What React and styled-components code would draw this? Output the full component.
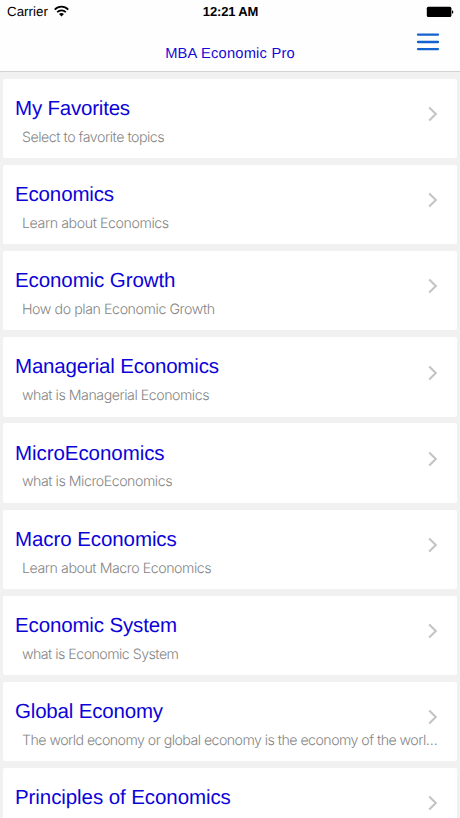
import React from 'react';
import styled, { createGlobalStyle } from 'styled-components';

const GlobalStyle = createGlobalStyle`
  * { box-sizing: border-box; }
  body { margin: 0; background: #f1f1f1; overflow: hidden; }
`;

const Screen = styled.div`
  width: 460px;
  height: 818px;
  overflow: hidden;
  display: flex;
  flex-direction: column;
  background: #f1f1f1;
  font-family: "Liberation Sans", Arial, sans-serif;
  text-rendering: geometricPrecision;
`;

const Header = styled.header`
  height: 72px;
  flex: none;
  background: #fefefe;
  border-bottom: 1px solid #d2d4d4;
`;

const StatusBar = styled.div`
  height: 24px;
  padding: 0 6px 0 7px;
  display: grid;
  grid-template-columns: 1fr auto 1fr;
  align-items: center;
  color: #000;
  font-size: 13.3px;
  line-height: 24px;
`;

const Carrier = styled.div`
  display: flex;
  align-items: center;
  gap: 6px;
  letter-spacing: 0.06px;
`;

const WifiIcon = styled.svg`
  display: block;
  margin-bottom: 2px;
`;

const Clock = styled.div`
  font-weight: 700;
  font-size: 13px;
  letter-spacing: -0.15px;
`;

const Battery = styled.svg`
  justify-self: end;
  display: block;
`;

const NavBar = styled.div`
  height: 47px;
  padding: 0 20px;
  display: grid;
  grid-template-columns: 1fr auto 1fr;
`;

const NavTitle = styled.h1`
  grid-column: 2;
  margin: 0;
  padding-top: 21px;
  font-size: 14.7px;
  line-height: 18px;
  font-weight: 400;
  letter-spacing: 0.2px;
  color: #1408d6;
`;

const MenuButton = styled.button`
  justify-self: end;
  align-self: start;
  margin-top: 8px;
  padding: 0;
  border: 0;
  background: none;
  svg { display: block; }
`;

const TopicList = styled.main`
  display: flex;
  flex-direction: column;
  gap: 6.7px;
  padding: 6.6px 3px 0;
`;

const Card = styled.article`
  height: 79.5px;
  flex: none;
  display: grid;
  grid-template-columns: 1fr 10px;
  grid-template-rows: 48px 24px;
  padding: 0 19px 0 12px;
  background: #fff;
  border-radius: 2px;
`;

const Title = styled.h2`
  margin: 0;
  padding-top: 17.3px;
  font-size: 20.5px;
  line-height: 25px;
  font-weight: 400;
  letter-spacing: ${(p) => p.$tracking}px;
  color: #0b03d8;
  white-space: nowrap;
`;

const Chevron = styled.svg`
  display: block;
  margin-top: 27.4px;
`;

const Subtitle = styled.p`
  grid-column: 1 / -1;
  margin: 0 -4px 0 7px;
  font-family: Inter, "Liberation Sans", sans-serif;
  font-size: 14.2px;
  line-height: 22px;
  font-weight: 300;
  letter-spacing: ${(p) => p.$tracking}px;
  color: #858585;
  white-space: nowrap;
`;

const topics = [
  ['My Favorites', 'Select to favorite topics', -0.2, -0.48],
  ['Economics', 'Learn about Economics', -0.15, -0.42],
  ['Economic Growth', 'How do plan Economic Growth', -0.1, -0.42],
  ['Managerial Economics', 'what is Managerial Economics', -0.18, -0.47],
  ['MicroEconomics', 'what is MicroEconomics', -0.06, -0.47],
  ['Macro Economics', 'Learn about Macro Economics', -0.08, -0.45],
  ['Economic System', 'what is Economic System', -0.14, -0.53],
  ['Global Economy', 'The world economy or global economy is the economy of the worl…', -0.18, -0.55],
  ['Principles of Economics', '', -0.08, 0],
];

export default function App() {
  return (
    <Screen>
      <GlobalStyle />
      <Header>
        <StatusBar>
          <Carrier>
            Carrier
            <WifiIcon width="15" height="12" viewBox="0 0 14 11" fill="none" stroke="#000" strokeWidth="1.6">
              <path d="M.7 4.2C4.2.5 9.8.5 13.3 4.2" />
              <path d="M3 6.5c2.2-2.2 5.8-2.2 8 0" />
              <path d="M4.7 8.2C6 7 8 7 9.3 8.2L7 10.6z" fill="#000" stroke="none" />
            </WifiIcon>
          </Carrier>
          <Clock>12:21 AM</Clock>
          <Battery width="28" height="12" viewBox="0 0 28 12">
            <rect x=".8" y=".7" width="24.6" height="10.4" rx="1.5" />
            <path d="M26 4.2c1.8.4 1.8 3.2 0 3.6z" />
          </Battery>
        </StatusBar>
        <NavBar>
          <NavTitle>MBA Economic Pro</NavTitle>
          <MenuButton aria-label="Menu">
            <svg width="24" height="20" viewBox="0 0 24 20" stroke="#1262cf" strokeWidth="2.3" strokeLinecap="round">
              <path d="M2 2.7h20M2 10h20M2 17.1h20" />
            </svg>
          </MenuButton>
        </NavBar>
      </Header>
      <TopicList>
        {topics.map(([title, subtitle, titleTracking, subtitleTracking]) => (
          <Card key={title}>
            <Title $tracking={titleTracking}>{title}</Title>
            <Chevron width="10" height="16" viewBox="0 0 10 16" fill="none" stroke="#c4c4c6" strokeWidth="2.1">
              <path d="M1.2 1.5 7.8 8l-6.6 6.5" />
            </Chevron>
            <Subtitle $tracking={subtitleTracking}>{subtitle}</Subtitle>
          </Card>
        ))}
      </TopicList>
    </Screen>
  );
}
